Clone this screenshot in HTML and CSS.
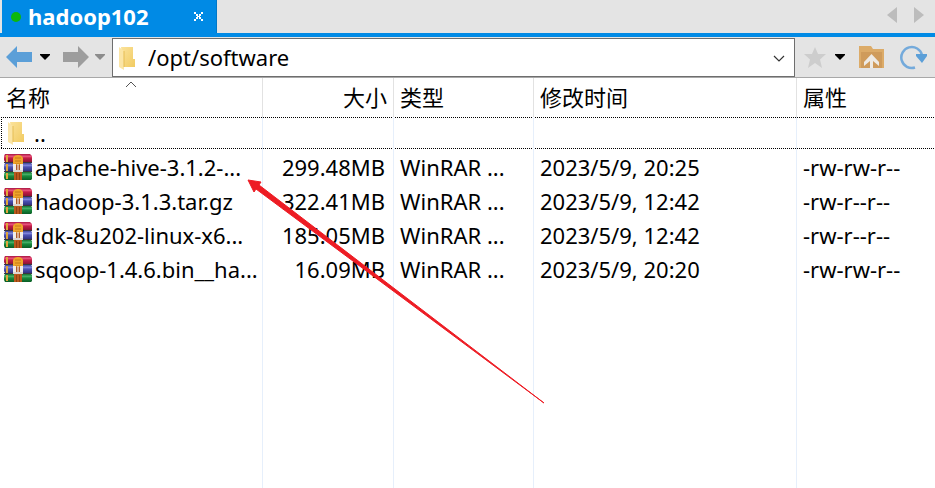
FILE: index.html
```html
<!DOCTYPE html>
<html lang="zh-CN">
<head>
  <meta charset="UTF-8">
  <meta name="viewport" content="width=device-width, initial-scale=1.0">
  <title>hadoop102</title>
  <link rel="stylesheet" href="styles.css">
</head>
<body>

<!-- Shared icons -->
<svg class="sprite" aria-hidden="true">
  <linearGradient id="red" x1="0" y1="0" x2="0" y2="1">
    <stop offset="0" stop-color="#a81440"/><stop offset="0.3" stop-color="#e8537c"/><stop offset="0.5" stop-color="#c41d48"/><stop offset="1" stop-color="#8c1233"/>
  </linearGradient>
  <linearGradient id="blue" x1="0" y1="0" x2="0" y2="1">
    <stop offset="0" stop-color="#3f449c"/><stop offset="0.3" stop-color="#7f86dc"/><stop offset="0.5" stop-color="#4c52b4"/><stop offset="1" stop-color="#2f3280"/>
  </linearGradient>
  <linearGradient id="green" x1="0" y1="0" x2="0" y2="1">
    <stop offset="0" stop-color="#12702f"/><stop offset="0.3" stop-color="#46b068"/><stop offset="0.5" stop-color="#178a3c"/><stop offset="1" stop-color="#0b5c25"/>
  </linearGradient>
  <linearGradient id="paper" x1="0" y1="0" x2="1" y2="1">
    <stop offset="0" stop-color="#fbe29a"/><stop offset="1" stop-color="#f1cb62"/>
  </linearGradient>
  <symbol id="rar" viewBox="0 0 28 26">
    <path d="M1 0H26L28 2V8H1L0 6V2Z" fill="url(#red)"/>
    <path d="M1 9H27L28 10V17H1L0 15V11Z" fill="url(#blue)"/>
    <path d="M1 18H27L28 19V25L27 26H1L0 24V20Z" fill="url(#green)"/>
    <path d="M0 8.500H28M0 17.500H28" stroke="#3a3540" stroke-width="1"/>
    <path d="M3 1V8M3 10V17M3 19V25" stroke="#e0a63a" stroke-width="2"/>
    <path d="M9 13V4Q10 1 14 1T19 4V13Z" fill="#f0a32a"/>
    <path d="M11 4H17M11 7H17M11 10H17" stroke="#c27a18" stroke-width="1"/>
    <path d="M9 10H12V18H9ZM16 10H19V18H16Z" fill="#efece8"/>
    <path d="M9 16H19V18H9Z" fill="#dcd6d0"/>
    <path d="M12 11H16V16H12Z" fill="#b05a28"/>
    <path d="M14 10V16" stroke="#fff" stroke-width="1"/>
    <path d="M10 18H18V26H10Z" fill="#b8581c"/>
    <path d="M12.500 19V26M15.500 19V26" stroke="#8f4212" stroke-width="1"/>
  </symbol>
  <symbol id="folder" viewBox="0 0 17 24">
    <path d="M2 1H14V13H16V21H5Z" fill="url(#paper)"/>
    <path d="M0 1L5 5V24L0 21Z" fill="#fbe5a6"/>
    <path d="M5 5V21" stroke="#e5bd55" stroke-width="1"/>
  </symbol>
  <symbol id="caret" viewBox="0 0 10 6">
    <path d="M0 0H10V1L5 6L0 1Z" fill="currentColor"/>
  </symbol>
</svg>

<div class="window">
  <header class="tabs">
    <div class="tab">
      <span class="status"></span>
      <a class="tab-name" href="#files">hadoop102</a>
      <button class="tab-close" aria-label="关闭">
        <svg width="9" height="9" viewBox="0 0 9 9"><path d="M0 0H2V2H0ZM7 0H9V2H7ZM2 2H4V4H2ZM5 2H7V4H5ZM3 4H6V5H3ZM2 5H4V7H2ZM5 5H7V7H5ZM0 7H2V9H0ZM7 7H9V9H7Z" fill="#fff"/></svg>
      </button>
    </div>
    <div class="tab-scroll">
      <button aria-label="向左"><svg width="10" height="16" viewBox="0 0 10 16"><path d="M10 0V16L0 8Z" fill="#bcbcbc"/></svg></button>
      <button aria-label="向右"><svg width="10" height="16" viewBox="0 0 10 16"><path d="M0 0V16L10 8Z" fill="#bcbcbc"/></svg></button>
    </div>
  </header>

  <nav class="toolbar">
    <div class="history">
      <button aria-label="后退"><svg width="26" height="22" viewBox="0 0 26 22"><path d="M0 11L11 0V6H26V16H11V22Z" fill="#5b9fd8"/></svg></button>
      <button aria-label="后退记录"><svg width="10" height="6"><use href="#caret"/></svg></button>
      <button class="next" aria-label="前进"><svg width="26" height="22" viewBox="0 0 26 22"><path d="M26 11L15 0V6H0V16H15V22Z" fill="#9d9d9d"/></svg></button>
      <button class="muted" aria-label="前进记录"><svg width="10" height="6"><use href="#caret"/></svg></button>
    </div>
    <div class="path">
      <svg class="path-icon" width="17" height="24"><use href="#folder"/></svg>
      <select aria-label="路径">
        <option>/opt/software</option>
      </select>
      <svg class="path-arrow" width="12" height="7" viewBox="0 0 12 7"><path d="M1 1L6 6L11 1" fill="none" stroke="#333" stroke-width="1.200"/></svg>
    </div>
    <div class="actions">
      <button aria-label="收藏"><svg width="22" height="21" viewBox="0 0 22 21"><path d="M11 0L14 7H22L16 12.500L18 21L11 16L4 21L6 12.500L0 7H8Z" fill="#cdcdcd"/></svg></button>
      <button aria-label="收藏列表"><svg width="10" height="6"><use href="#caret"/></svg></button>
      <button class="up" aria-label="上一级">
        <svg width="25" height="22" viewBox="0 0 25 22">
          <path d="M0 0H12L14 3H25V22H0Z" fill="#dcab68"/>
          <path d="M2 6H23V22H2Z" fill="#cf9b5b"/>
          <path d="M12.500 8L20 16V20L14 15V22H11V15L5 20V16Z" fill="#eeeae4"/>
        </svg>
      </button>
      <button class="refresh" aria-label="刷新">
        <svg width="27" height="25" viewBox="0 0 27 25">
          <path d="M15 22.500A10.500 10.500 0 1 1 22 10" fill="none" stroke="#74aadb" stroke-width="2.500"/>
          <path d="M16 9H27V11L22 18L16 11Z" fill="#5b9fd8"/>
        </svg>
      </button>
    </div>
  </nav>

  <main class="files" id="files">
    <table>
      <colgroup>
        <col class="col-name">
        <col class="col-size">
        <col class="col-type">
        <col class="col-time">
        <col>
      </colgroup>
      <thead>
        <tr>
          <th class="sorted" aria-sort="ascending">名称
            <svg class="sort" width="12" height="7" viewBox="0 0 12 7"><path d="M1 6L6 1L11 6" fill="none" stroke="#555" stroke-width="1"/></svg>
          </th>
          <th class="size">大小</th>
          <th>类型</th>
          <th>修改时间</th>
          <th>属性</th>
        </tr>
      </thead>
      <tbody>
        <tr class="focused">
          <td><span class="file"><svg class="dir" width="17" height="24"><use href="#folder"/></svg>..</span></td>
          <td></td><td></td><td></td><td></td>
        </tr>
        <tr>
          <td><span class="file"><svg width="28" height="26"><use href="#rar"/></svg>apache-hive-3.1.2-...</span></td>
          <td class="size">299.48MB</td>
          <td>WinRAR ...</td>
          <td>2023/5/9, 20:25</td>
          <td>-rw-rw-r--</td>
        </tr>
        <tr>
          <td><span class="file"><svg width="28" height="26"><use href="#rar"/></svg>hadoop-3.1.3.tar.gz</span></td>
          <td class="size">322.41MB</td>
          <td>WinRAR ...</td>
          <td>2023/5/9, 12:42</td>
          <td>-rw-r--r--</td>
        </tr>
        <tr>
          <td><span class="file"><svg width="28" height="26"><use href="#rar"/></svg>jdk-8u202-linux-x6...</span></td>
          <td class="size">185.05MB</td>
          <td>WinRAR ...</td>
          <td>2023/5/9, 12:42</td>
          <td>-rw-r--r--</td>
        </tr>
        <tr>
          <td><span class="file"><svg width="28" height="26"><use href="#rar"/></svg>sqoop-1.4.6.bin__ha...</span></td>
          <td class="size">16.09MB</td>
          <td>WinRAR ...</td>
          <td>2023/5/9, 20:20</td>
          <td>-rw-rw-r--</td>
        </tr>
        <!-- Empty space below the files, keeps the column lines going -->
        <tr class="rest"><td></td><td></td><td></td><td></td><td></td></tr>
      </tbody>
    </table>
    <svg class="pointer" width="300" height="226" viewBox="0 0 300 226" aria-hidden="true">
      <path d="M1 1L14 3L12 6L297 224L9 10L7 13Z" fill="#ed1c24" stroke="#ed1c24" stroke-width="1" stroke-linejoin="round"/>
    </svg>
  </main>
</div>

</body>
</html>
```
FILE: styles.css
```css
* {
  box-sizing: border-box;
}

body {
  margin: 0;
  background: #fff;
  color: #000;
  font-family: "Noto Sans", "Noto Sans CJK SC", sans-serif;
  font-size: 22px;
  line-height: 32px;
}

button {
  display: flex;
  padding: 0;
  border: 0;
  background: none;
  color: #000;
}

svg {
  flex: none;
}

.sprite {
  position: absolute;
  width: 0;
  height: 0;
}

.window {
  display: flex;
  flex-direction: column;
  height: 100vh;
  overflow: hidden;
}

/* Tabs */
.tabs {
  display: flex;
  justify-content: space-between;
  height: 37px;
  padding-left: 2px;
  background: #e4e4e4;
  border-bottom: 4px solid #008ae5;
}

.tab {
  display: flex;
  align-items: center;
  width: 215px;
  padding: 0 13px 0 9px;
  background: #008ae5;
  border-right: 1px solid #0078c8;
  color: #fff;
}

.status {
  width: 10px;
  height: 10px;
  margin-right: 7px;
  border-radius: 50%;
  background: #0db80d;
}

.tab-name {
  flex: 1;
  padding-bottom: 2px;
  color: #fff;
  font-weight: bold;
  text-decoration: none;
}

.tab-scroll {
  display: flex;
  align-items: center;
  gap: 17px;
  padding: 0 11px 4px 0;
}

/* Toolbar */
.toolbar {
  display: flex;
  height: 41px;
  background: #e4e4e4;
  border-bottom: 1px solid #a8a8a8;
}

.history,
.actions {
  display: flex;
  align-items: center;
}

.history {
  gap: 8px;
  padding: 0 7px 0 6px;
}

.history .next {
  margin-left: 5px;
}

.history .muted {
  color: #8c8c8c;
  margin-left: -2px;
}

.path {
  position: relative;
  flex: 1;
  margin: 1px 0 0;
  border: 1px solid #6e6e6e;
  background: #fff;
}

.path select {
  width: 100%;
  height: 100%;
  padding: 0 35px 2px;
  border: 0;
  background: none;
  color: #000;
  font: inherit;
  appearance: none;
}

.path-icon,
.path-arrow {
  position: absolute;
  pointer-events: none;
}

.path-icon {
  top: 7px;
  left: 6px;
}

.path-arrow {
  top: 16px;
  right: 9px;
}

.actions {
  gap: 9px;
  padding: 0 8px 0 9px;
}

.actions .up {
  margin-left: 5px;
}

.actions .refresh {
  margin-left: 7px;
}

/* File list */
.files {
  position: relative;
  flex: 1;
}

table {
  width: 100%;
  height: 100%;
  table-layout: fixed;
  border-collapse: separate;
  border-spacing: 0;
}

.col-name {
  width: 263px;
}

.col-size {
  width: 131px;
}

.col-type {
  width: 140px;
}

.col-time {
  width: 263px;
}

th,
td {
  height: 34px;
  padding: 0 6px 2px;
  border-right: 1px solid #e6effb;
  text-align: left;
  white-space: nowrap;
}

th {
  height: 39px;
  padding-top: 1px;
  border-color: #e2e2e2;
  font-weight: normal;
}

th:last-child,
td:last-child {
  border-right: 0;
}

.size {
  text-align: right;
}

td.size {
  padding-right: 8px;
}

.sorted {
  position: relative;
}

.sort {
  position: absolute;
  top: 3px;
  left: 50%;
  margin-left: -6px;
}

.file {
  display: flex;
  align-items: center;
  gap: 3px;
  margin-left: -2px;
}

.file .dir {
  margin: 0 6px 0 4px;
}

/* Dotted focus rectangle */
.focused {
  background:
    repeating-linear-gradient(90deg, #000 0 1px, transparent 1px 2px) 1px 0 / 100% 1px no-repeat,
    repeating-linear-gradient(90deg, #000 0 1px, transparent 1px 2px) 1px 31px / 100% 1px no-repeat,
    repeating-linear-gradient(#000 0 1px, transparent 1px 2px) 1px 0 / 1px 32px no-repeat;
}

.rest td {
  height: auto;
}

.pointer {
  position: absolute;
  top: 101px;
  left: 247px;
  pointer-events: none;
}
```
